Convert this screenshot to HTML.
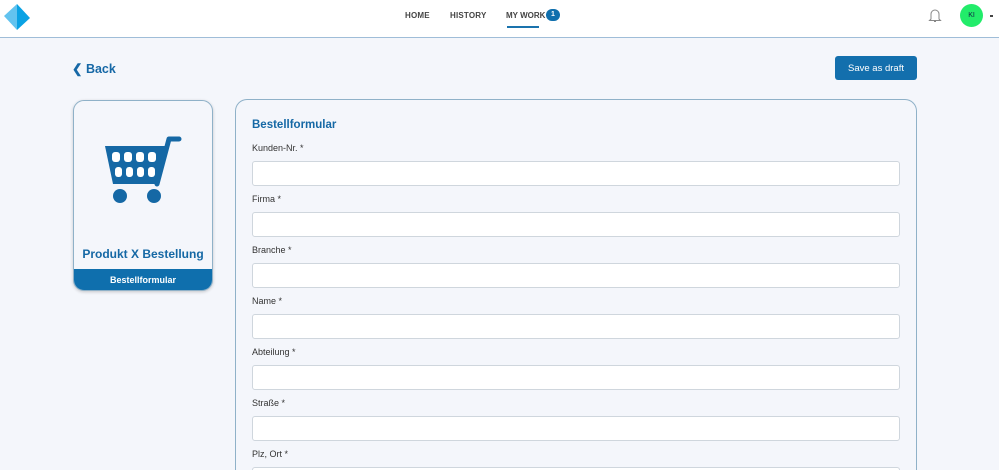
<!DOCTYPE html>
<html style="width:999px;height:470px;overflow:hidden"><head><meta charset="utf-8"><style>
*{box-sizing:border-box;margin:0;padding:0}
body{width:999px;height:470px;overflow:hidden;background:#f4f6fb;font-family:"Liberation Sans",sans-serif;position:relative}
.hdr{position:absolute;left:0;top:0;width:999px;height:38px;background:#fff;border-bottom:1px solid #9fbdd8}
.nav{position:absolute;top:11px;font-size:8px;font-weight:bold;color:#444;letter-spacing:.2px}
.badge{position:absolute;left:546px;top:9px;width:14px;height:12px;border-radius:6px;background:#0f6fad;color:#fff;font-size:7px;font-weight:bold;text-align:center;line-height:12px}
.ul{position:absolute;left:507px;top:26px;width:32px;height:2px;background:#1a73ad}
.av{position:absolute;left:960px;top:4px;width:23px;height:23px;border-radius:50%;background:#22ec6a;font-size:7px;text-align:center;line-height:23px;color:#124}
.back{position:absolute;left:72px;top:61px;color:#1668a6;font-size:12.5px;font-weight:bold}
.save{position:absolute;left:835px;top:56px;width:82px;height:24px;background:#136fad;border-radius:3px;color:#fff;font-size:9.5px;display:flex;align-items:center;justify-content:center}
.lc{position:absolute;left:73px;top:100px;width:140px;height:191px;border:1px solid #8fb1c8;border-radius:11px;background:#f4f6fb;overflow:hidden;box-shadow:0 1px 3px rgba(0,0,0,.2)}
.lc .t{position:absolute;top:146px;width:100%;text-align:center;color:#1568a5;font-weight:bold;font-size:12px}
.lc .b{position:absolute;top:168px;width:100%;height:23px;background:#0f6fad;color:#fff;font-size:9px;font-weight:bold;text-align:center;line-height:23px}
.mc{position:absolute;left:235px;top:99px;width:682px;height:371px;border:1px solid #8fb1c8;border-bottom:none;border-radius:12px 12px 0 0;background:#f4f6fb}
.h{position:absolute;left:252px;top:119px;color:#1568a5;font-size:11.5px;font-weight:bold}
.lb{position:absolute;left:252px;font-size:9px;color:#333}
.in{position:absolute;left:252px;width:648px;height:25px;background:#fff;border:1px solid #cfd6dd;border-radius:3px}
</style></head><body>
<div class="hdr">
<svg style="position:absolute;left:3px;top:3px" width="28" height="28" viewBox="0 0 28 28"><polygon points="14,1 1,13 14,27" fill="#62c3ef"/><polygon points="14,1 27,15 14,27" fill="#0aa2e4"/></svg>
<div class="nav" style="left:405px">HOME</div>
<div class="nav" style="left:450px">HISTORY</div>
<div class="nav" style="left:506px;letter-spacing:0">MY WORK</div>
<div class="badge">1</div><div class="ul"></div>
<svg style="position:absolute;left:928px;top:8px" width="14" height="15" viewBox="0 0 14 15"><path d="M3 11V6a4 4 0 0 1 8 0v5l1.5 1.5h-11z M6 13.5h2" fill="none" stroke="#888" stroke-width="1"/></svg>
<div class="av">KI</div>
<div style="position:absolute;left:990px;top:15px;width:3px;height:2px;background:#444"></div>
</div>
<div class="back">&#10094; Back</div>
<div class="save">Save as draft</div>
<div class="lc">
<svg style="position:absolute;left:31px;top:34px" width="80" height="70" viewBox="105 134 80 70">
<path d="M105 145H168L159 183H113Z" fill="#1568a5"/>
<path d="M157 183L169 138H179" fill="none" stroke="#1568a5" stroke-width="5" stroke-linecap="round" stroke-linejoin="round"/>
<g fill="#fff"><rect x="112" y="151" width="8" height="10" rx="3"/><rect x="124" y="151" width="8" height="10" rx="3"/><rect x="136" y="151" width="8" height="10" rx="3"/><rect x="148" y="151" width="8" height="10" rx="3"/>
<rect x="115" y="166" width="7" height="10" rx="3"/><rect x="126" y="166" width="7" height="10" rx="3"/><rect x="137" y="166" width="7" height="10" rx="3"/><rect x="148" y="166" width="7" height="10" rx="3"/></g>
<circle cx="120" cy="195" r="7" fill="#1568a5"/><circle cx="154" cy="195" r="7" fill="#1568a5"/></svg>
<div class="t">Produkt X Bestellung</div>
<div class="b">Bestellformular</div>
</div>
<div class="mc"></div>
<div class="h">Bestellformular</div>
<div class="lb" style="top:143px">Kunden-Nr. *</div><div class="in" style="top:161px"></div>
<div class="lb" style="top:194px">Firma *</div><div class="in" style="top:212px"></div>
<div class="lb" style="top:245px">Branche *</div><div class="in" style="top:263px"></div>
<div class="lb" style="top:296px">Name *</div><div class="in" style="top:314px"></div>
<div class="lb" style="top:347px">Abteilung *</div><div class="in" style="top:365px"></div>
<div class="lb" style="top:398px">Straße *</div><div class="in" style="top:416px"></div>
<div class="lb" style="top:449px">Plz, Ort *</div><div class="in" style="top:467px;height:3px;border-bottom:none;border-radius:3px 3px 0 0"></div>
</body></html>
